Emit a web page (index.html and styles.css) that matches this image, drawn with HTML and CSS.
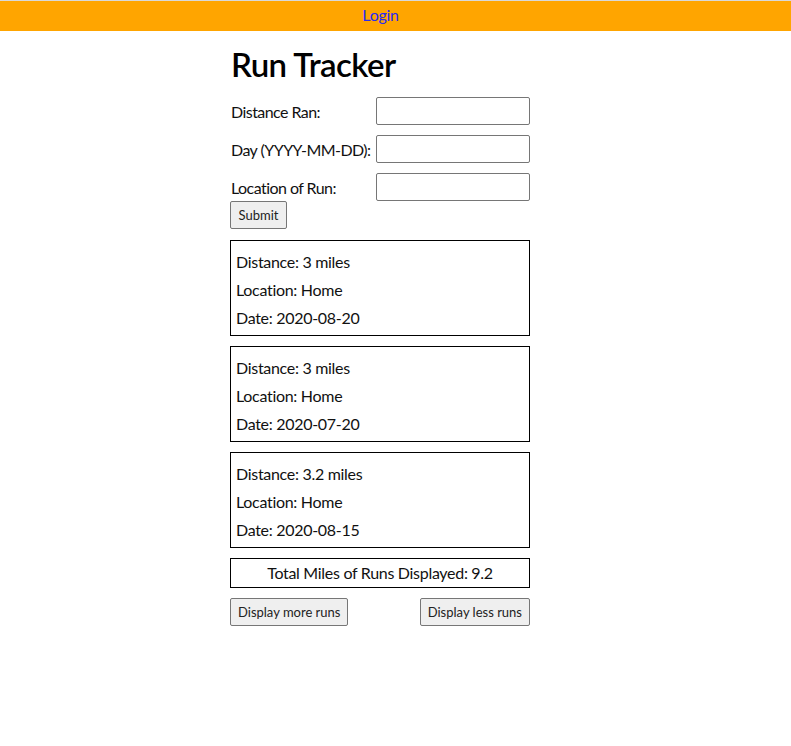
FILE: index.html
```html
<!DOCTYPE html>
<html lang="en">
<head>
<meta charset="utf-8">
<title>Run Tracker</title>
<link rel="stylesheet" href="styles.css">
</head>
<body>
<header class="topbar">
  <nav class="topbar-inner"><a class="login" href="#">Login</a></nav>
</header>
<main class="app">
  <h1 class="title">Run Tracker</h1>
  <form class="run-form">
    <div class="rows">
      <label class="row"><span class="label">Distance Ran:</span><input class="field" type="text"></label>
      <label class="row"><span class="label">Day (YYYY-MM-DD):</span><input class="field" type="text"></label>
      <label class="row"><span class="label">Location of Run:</span><input class="field" type="text"></label>
    </div>
    <button class="btn submit" type="button">Submit</button>
  </form>
  <section class="runs">
    <div class="card">
      <p class="line">Distance: 3 miles</p>
      <p class="line">Location: Home</p>
      <p class="line">Date: 2020-08-20</p>
    </div>
    <div class="card">
      <p class="line">Distance: 3 miles</p>
      <p class="line">Location: Home</p>
      <p class="line">Date: 2020-07-20</p>
    </div>
    <div class="card">
      <p class="line">Distance: 3.2 miles</p>
      <p class="line">Location: Home</p>
      <p class="line">Date: 2020-08-15</p>
    </div>
    <div class="total">Total Miles of Runs Displayed: 9.2</div>
    <div class="actions">
      <button class="btn" type="button">Display more runs</button>
      <button class="btn" type="button">Display less runs</button>
    </div>
  </section>
</main>
</body>
</html>
```
FILE: styles.css
```css
* { box-sizing: border-box; }
html, body { margin: 0; padding: 0; background: #fff; }
body {
  font-family: Lato, "Noto Sans", sans-serif;
  font-size: 16px;
  letter-spacing: -0.3px;
  color: #111;
  border-top: 1px solid #d9d9d9;
}
.topbar {
  background: #ffa500;
  height: 30px;
}
.topbar-inner {
  width: 761px;
  text-align: center;
  line-height: 28px;
}
.login {
  color: #2b2bf0;
  text-decoration: none;
  font-size: 16px;
}
.app {
  width: 300px;
  margin-left: 230px;
}
.title {
  margin: 0;
  padding-top: 13px;
  height: 66px;
  font-size: 33px;
  font-weight: 600;
  letter-spacing: -0.6px;
  line-height: 40px;
  padding-left: 1px;
  color: #000;
}
.rows {
  display: flex;
  flex-direction: column;
  gap: 10px;
}
.row {
  display: flex;
  align-items: center;
  justify-content: space-between;
  height: 28px;
}
.label {
  padding-left: 1px;
  white-space: nowrap;
  flex: none;
  letter-spacing: -0.55px;
}
.field {
  flex: none;
  width: 154px;
  height: 28px;
  border: 1px solid #767676;
  border-radius: 2px;
  padding: 0 4px;
  font: inherit;
}
.btn {
  font-family: inherit;
  font-size: 13px;
  letter-spacing: 0;
  color: #222;
  background: #efefef;
  border: 1px solid #767676;
  border-radius: 2px;
  height: 28px;
  padding: 0 7px;
}
.submit { width: 57px; padding: 0; }
.runs {
  display: flex;
  flex-direction: column;
  gap: 10px;
  margin-top: 11px;
}
.card {
  border: 1px solid #000;
  height: 96px;
  padding: 7px 5px 1px;
}
.line {
  margin: 0;
  line-height: 28px;
}
.total {
  border: 1px solid #000;
  height: 30px;
  line-height: 28px;
  text-align: center;
}
.actions {
  display: flex;
  justify-content: space-between;
}
```
